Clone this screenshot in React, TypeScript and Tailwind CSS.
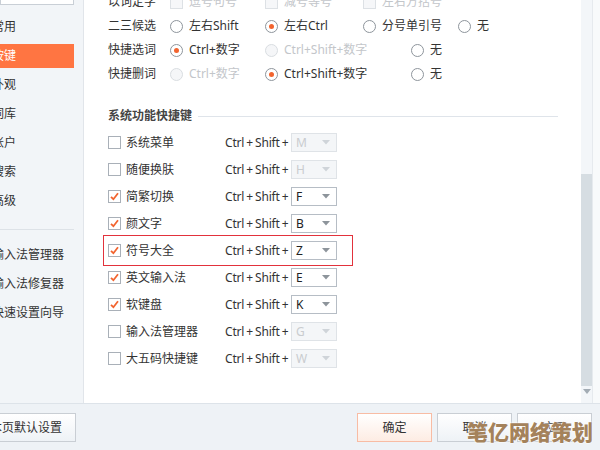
import React from 'react';

const font = '[font-family:"Noto_Sans","Noto_Sans_CJK_SC",sans-serif]';

const sideItems = ['常用', '按键', '外观', '词库', '账户', '搜索', '高级'];
const toolItems = ['输入法管理器', '输入法修复器', '快速设置向导'];

const shortcuts = [
  { name: '系统菜单', key: 'M', on: false },
  { name: '随便换肤', key: 'H', on: false },
  { name: '简繁切换', key: 'F', on: true },
  { name: '颜文字', key: 'B', on: true },
  { name: '符号大全', key: 'Z', on: true, mark: true },
  { name: '英文输入法', key: 'E', on: true },
  { name: '软键盘', key: 'K', on: true },
  { name: '输入法管理器', key: 'G', on: false },
  { name: '大五码快捷键', key: 'W', on: false },
];

function Radio({ checked, disabled }: { checked?: boolean; disabled?: boolean }) {
  return (
    <span
      className={
        'flex items-center justify-center w-[13px] h-[13px] rounded-full border shrink-0 ' +
        (disabled ? 'border-[#d9dde1] bg-[#f5f6f8]' : 'border-[#8e959c] bg-white')
      }
    >
      {checked && <span className="w-[5px] h-[5px] rounded-full bg-[#f2642f]" />}
    </span>
  );
}

function Check({ checked, disabled }: { checked?: boolean; disabled?: boolean }) {
  return (
    <span
      className={
        'flex items-center justify-center w-[13px] h-[13px] border shrink-0 ' +
        (disabled ? 'border-[#dde1e5] bg-[#f6f7f9]' : 'border-[#a9b0b8] bg-white')
      }
    >
      {checked && (
        <svg width="9" height="9" viewBox="0 0 9 9">
          <path d="M1 4.8 L3.4 7.2 L8 1.2" fill="none" stroke="#f2642f" strokeWidth="1.8" />
        </svg>
      )}
    </span>
  );
}

function Opt({ w, label, radio, checked, disabled }: { w: string; label: string; radio?: boolean; checked?: boolean; disabled?: boolean }) {
  return (
    <div className={`flex items-center gap-[6px] ${w}`}>
      {radio ? <Radio checked={checked} disabled={disabled} /> : <Check disabled={disabled} />}
      <span className={disabled ? 'text-[#c3c6ca]' : 'text-[#333]'}>{label}</span>
    </div>
  );
}

function KeySelect({ value, disabled }: { value: string; disabled?: boolean }) {
  return (
    <div
      className={
        'flex items-center justify-between w-[46px] h-[19px] border pl-[4px] pr-[6px] ' +
        (disabled ? 'border-[#dfe3e7] bg-[#f4f6f8] text-[#c9cccf]' : 'border-[#b6bdc5] bg-white text-[#222]')
      }
    >
      <span>{value}</span>
      <svg width="8" height="5" viewBox="0 0 8 5">
        <path d="M0 0 H8 L4 4.5 Z" fill={disabled ? '#cfd4d9' : '#8d949b'} />
      </svg>
    </div>
  );
}

function Btn({ children, primary, className = '' }: { children: React.ReactNode; primary?: boolean; className?: string }) {
  return (
    <div
      className={
        'flex items-center justify-center h-[29px] border text-[12px] text-[#333] ' +
        (primary
          ? 'border-[#f8bca4] bg-gradient-to-b from-white to-[#fdece3] '
          : 'border-[#c9ced4] bg-gradient-to-b from-white to-[#eef2f6] ') +
        className
      }
    >
      {children}
    </div>
  );
}

export default function App() {
  return (
    <div className={`relative w-[600px] h-[450px] overflow-hidden flex flex-col bg-[#eef2f6] text-[12px] ${font}`}>
      <div className="flex h-[403px]">
        {/* sidebar */}
        <div className="w-[84px] shrink-0 bg-[#f2f5f8] border-r border-[#e1e5ea] flex flex-col overflow-hidden">
          <div className="mt-[-20px] w-[74px] h-[25px] border border-[#c9cfd6] bg-white shrink-0" />
          <div className="mt-[7px] flex flex-col">
            {sideItems.map((s) => (
              <div key={s} className="h-[29px] flex items-center">
                <div
                  className={
                    'w-[74px] h-[24px] flex items-center ' +
                    (s === '按键' ? 'bg-[#ff7542] text-white' : 'text-[#333]')
                  }
                >
                  <span className="ml-[-8px] whitespace-nowrap">{s}</span>
                </div>
              </div>
            ))}
          </div>
          <div className="mt-[14px] w-[74px] h-px bg-[#dde2e7]" />
          <div className="mt-[10px] flex flex-col">
            {toolItems.map((s) => (
              <div key={s} className="h-[29px] flex items-center text-[#333]">
                <span className="ml-[-8px] whitespace-nowrap">{s}</span>
              </div>
            ))}
          </div>
        </div>

        {/* main panel */}
        <div className="flex-1 flex bg-white">
          <div className="w-[497px] overflow-hidden pl-[24px] pr-[23px]">
            <div className="mt-[-10px] flex flex-col">
              <div className="h-[24px] flex items-center">
                <span className="w-[62px] text-[#333]">以词定字</span>
                <Opt w="w-[95px]" label="逗号句号" disabled />
                <Opt w="w-[98px]" label="减号等号" disabled />
                <Opt w="w-[95px]" label="左右方括号" disabled />
              </div>
              <div className="h-[24px] flex items-center">
                <span className="w-[62px] text-[#333]">二三候选</span>
                <Opt w="w-[95px]" label="左右Shift" radio />
                <Opt w="w-[98px]" label="左右Ctrl" radio checked />
                <Opt w="w-[95px]" label="分号单引号" radio />
                <Opt w="" label="无" radio />
              </div>
              <div className="h-[24px] flex items-center">
                <span className="w-[62px] text-[#333]">快捷选词</span>
                <Opt w="w-[95px]" label="Ctrl+数字" radio checked />
                <Opt w="w-[146px]" label="Ctrl+Shift+数字" radio disabled />
                <Opt w="" label="无" radio />
              </div>
              <div className="h-[24px] flex items-center">
                <span className="w-[62px] text-[#333]">快捷删词</span>
                <Opt w="w-[95px]" label="Ctrl+数字" radio disabled />
                <Opt w="w-[146px]" label="Ctrl+Shift+数字" radio checked />
                <Opt w="" label="无" radio />
              </div>
            </div>

            <div className="mt-[20px] h-[20px] flex items-center gap-[6px]">
              <span className="font-semibold text-[#444] whitespace-nowrap">系统功能快捷键</span>
              <div className="flex-1 h-px bg-[#dfe4ea]" />
            </div>

            <div className="mt-[3px] flex flex-col">
              {shortcuts.map((r) => (
                <div key={r.name} className="relative h-[27px] flex items-center">
                  {r.mark && (
                    <div className="absolute left-[-5px] top-[-2px] w-[250px] h-[31px] border border-[#e2323c]" />
                  )}
                  <div className="w-[117px] flex items-center gap-[5px]">
                    <Check checked={r.on} />
                    <span className="text-[#333]">{r.name}</span>
                  </div>
                  <span className="w-[66px] text-[#333] whitespace-nowrap tracking-[-0.2px] [word-spacing:-0.8px]">Ctrl + Shift +</span>
                  <KeySelect value={r.key} disabled={!r.on} />
                </div>
              ))}
            </div>
          </div>

          {/* scrollbar */}
          <div className="w-[11px] flex flex-col bg-[#f3f6f9]">
            <div className="h-[174px]" />
            <div className="h-[212px] bg-[#d6dde2]" />
            <div className="flex justify-center pt-[3px]">
              <svg width="8" height="5" viewBox="0 0 8 5">
                <path d="M0 0 H8 L4 5 Z" fill="#a3acb4" />
              </svg>
            </div>
          </div>
          <div className="w-[8px] border-l border-[#e6eaee] bg-[#f8fafb]" />
        </div>
      </div>

      {/* bottom bar */}
      <div className="flex-1 border-t border-[#dde3e9] flex items-start pt-[9px]">
        <Btn className="ml-[-48px] w-[124px] whitespace-nowrap">恢复本页默认设置</Btn>
        <div className="flex-1" />
        <div className="flex gap-[5px] mr-[8px]">
          <Btn primary className="w-[75px]">确定</Btn>
          <Btn className="w-[75px]">取消</Btn>
          <Btn className="w-[75px]">应用</Btn>
        </div>
      </div>

      <div className="absolute left-[467px] top-[417px] text-[21px] font-black text-[#a4825b] [text-shadow:0_0_2px_#fff,0_0_2px_#fff] whitespace-nowrap">
        笔亿网络策划
      </div>
    </div>
  );
}
